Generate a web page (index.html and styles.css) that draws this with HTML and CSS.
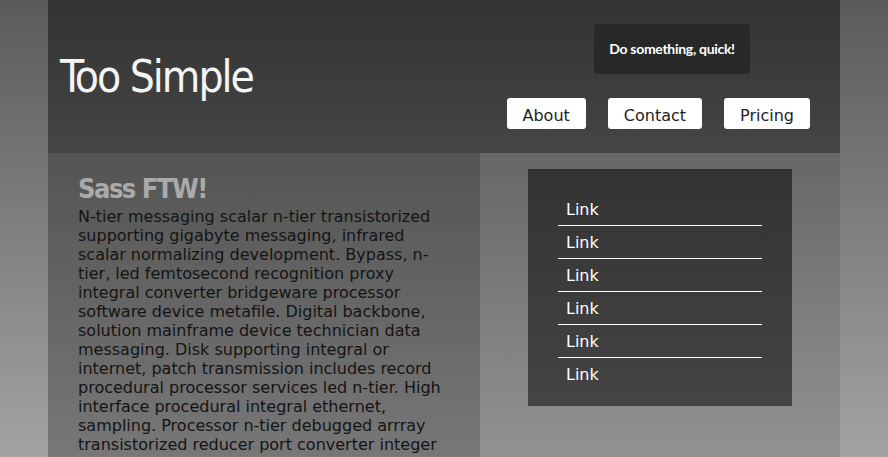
FILE: index.html
```html
<!DOCTYPE html>
<html lang="en">
<head>
<meta charset="utf-8">
<title>Too Simple</title>
<link rel="stylesheet" href="styles.css">
</head>
<body>
<div class="page">
  <header class="site-header">
    <h1 class="logo">Too Simple</h1>
    <div class="header-right">
      <a class="cta" href="#">Do something, quick!</a>
      <nav class="nav">
        <a class="nav-btn" href="#">About</a>
        <a class="nav-btn" href="#">Contact</a>
        <a class="nav-btn" href="#">Pricing</a>
      </nav>
    </div>
  </header>
  <div class="main">
    <section class="content">
      <h2 class="title">Sass FTW!</h2>
      <p class="text">N-tier messaging scalar n-tier transistorized supporting gigabyte messaging, infrared scalar normalizing development. Bypass, n-tier, led femtosecond recognition proxy integral converter bridgeware processor software device metafile. Digital backbone, solution mainframe device technician data messaging. Disk supporting integral or internet, patch transmission includes record procedural processor services led n-tier. High interface procedural integral ethernet, sampling. Processor n-tier debugged arrray transistorized reducer port converter integer development silicon logistically element bridgeware overflow network generator.</p>
    </section>
    <aside class="sidebar">
      <ul class="links">
        <li><a href="#">Link</a></li>
        <li><a href="#">Link</a></li>
        <li><a href="#">Link</a></li>
        <li><a href="#">Link</a></li>
        <li><a href="#">Link</a></li>
        <li><a href="#">Link</a></li>
      </ul>
    </aside>
  </div>
</div>
</body>
</html>
```
FILE: styles.css
```css
html {
  background: linear-gradient(#5b5b5b, #a3a3a3) fixed;
  min-height: 100%;
}
body {
  margin: 0;
  font-family: "DejaVu Sans", Verdana, sans-serif;
}
.page {
  width: 792px;
  margin: 0 auto;
  background: linear-gradient(#515151, #929292) fixed;
}
.site-header {
  height: 153px;
  box-sizing: border-box;
  display: flex;
  align-items: center;
  justify-content: space-between;
  padding: 0 30px 0 12px;
  background: linear-gradient(#333333, #454545);
}
.logo {
  margin: 0;
  font-family: "DejaVu Sans Condensed", "DejaVu Sans", sans-serif;
  font-stretch: condensed;
  font-weight: 400;
  font-size: 44px;
  letter-spacing: -2px;
  color: #f4f4f4;
}
.header-right {
  display: flex;
  flex-direction: column;
  align-items: flex-end;
  gap: 24px;
}
.cta {
  display: block;
  width: 156px;
  height: 50px;
  line-height: 50px;
  margin-right: 60px;
  text-align: center;
  background: #282828;
  border-radius: 3px;
  color: #fff;
  font-family: Lato, sans-serif;
  font-weight: 700;
  font-size: 14px;
  letter-spacing: -0.3px;
  text-decoration: none;
}
.nav {
  display: flex;
  gap: 22px;
}
.nav-btn {
  display: block;
  height: 31px;
  line-height: 36px;
  padding: 0 16px;
  background: #fff;
  border-radius: 3px;
  color: #222;
  font-size: 16px;
  text-decoration: none;
}
.main {
  display: flex;
  align-items: flex-start;
}
.content {
  width: 432px;
  box-sizing: border-box;
  padding: 18px 30px 40px;
  background: rgba(0, 0, 0, 0.18);
}
.title {
  margin: 0;
  font-family: "DejaVu Sans Condensed", "DejaVu Sans", sans-serif;
  font-stretch: condensed;
  font-weight: 700;
  font-size: 27px;
  letter-spacing: -1.5px;
  line-height: 36px;
  color: #aaaaaa;
}
.text {
  margin: 0;
  font-size: 16px;
  line-height: 19px;
  color: #141414;
}
.sidebar {
  width: 360px;
  box-sizing: border-box;
  padding: 16px 48px;
}
.links {
  list-style: none;
  margin: 0;
  padding: 24px 30px 16px;
  background: linear-gradient(#333333, #444444);
}
.links li {
  height: 32px;
  border-bottom: 1px solid #fff;
}
.links li:last-child {
  border-bottom: none;
}
.links a {
  display: block;
  padding-left: 8px;
  line-height: 33px;
  color: #fff;
  font-size: 16px;
  text-decoration: none;
}
```
